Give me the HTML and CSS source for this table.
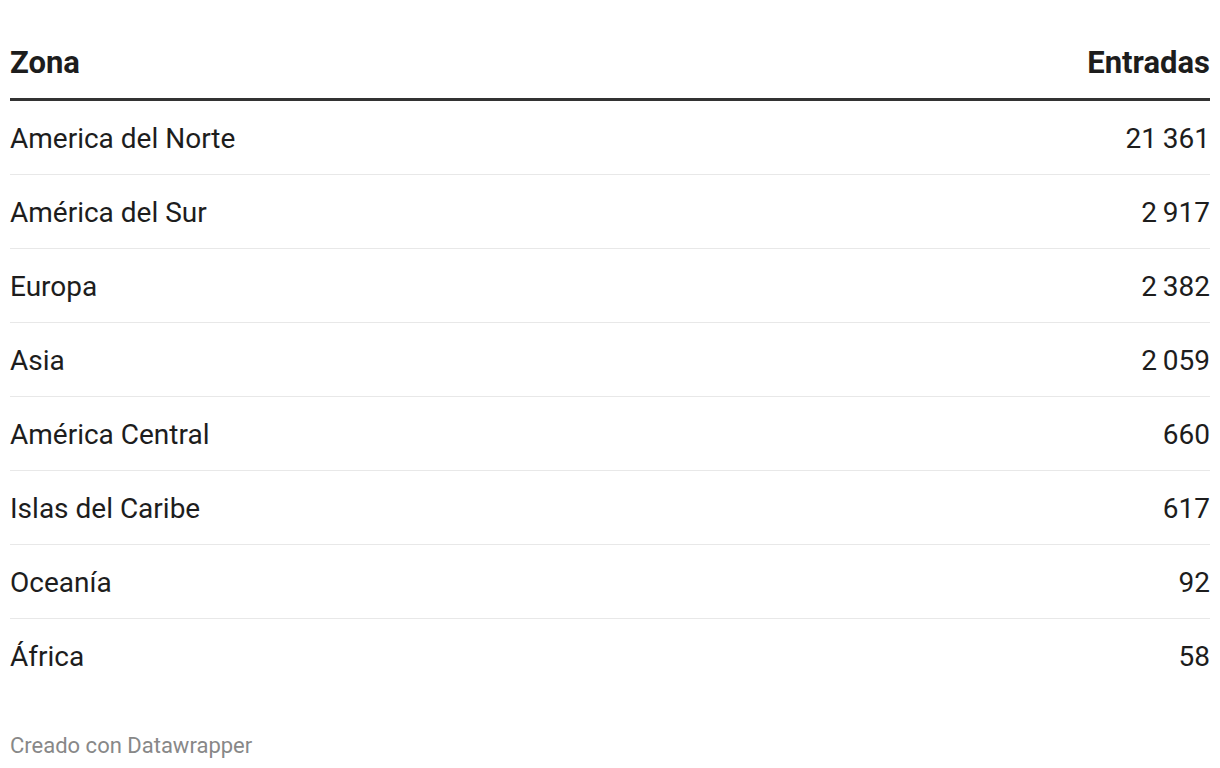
FILE: index.html
```html
<!DOCTYPE html>
<html lang="es">
<head>
<meta charset="utf-8">
<link rel="stylesheet" href="styles.css">
</head>
<body>
<div class="chart">
  <table class="tbl">
    <thead>
      <tr><th class="l">Zona</th><th class="r">Entradas</th></tr>
    </thead>
    <tbody>
      <tr><td class="l">America del Norte</td><td class="r">21&#8201;361</td></tr>
      <tr><td class="l">América del Sur</td><td class="r">2&#8201;917</td></tr>
      <tr><td class="l">Europa</td><td class="r">2&#8201;382</td></tr>
      <tr><td class="l">Asia</td><td class="r">2&#8201;059</td></tr>
      <tr><td class="l">América Central</td><td class="r">660</td></tr>
      <tr><td class="l">Islas del Caribe</td><td class="r">617</td></tr>
      <tr><td class="l">Oceanía</td><td class="r">92</td></tr>
      <tr><td class="l">África</td><td class="r">58</td></tr>
    </tbody>
  </table>
  <div class="footer">Creado con Datawrapper</div>
</div>
</body>
</html>
```
FILE: styles.css
```css
html, body {
  margin: 0;
  padding: 0;
  background: #fff;
}
.chart {
  padding: 0 10px;
  font-family: Roboto, "Liberation Sans", sans-serif;
  color: #1d1d1d;
}
.tbl {
  width: 100%;
  border-collapse: collapse;
  font-size: 28px;
}
.tbl th {
  font-size: 31px;
  font-weight: 700;
  padding: 44px 0 16px;
  line-height: 38px;
  border-bottom: 3px solid #333;
}
.tbl td {
  height: 71px;
  padding: 2px 0 0;
  line-height: 32px;
  vertical-align: middle;
  border-bottom: 1px solid #e8e8e8;
}
.tbl tbody tr:last-child td {
  border-bottom: none;
}
.l { text-align: left; }
.r { text-align: right; }
.footer {
  margin-top: 42px;
  font-size: 22px;
  line-height: 24px;
  color: #888;
}
```
